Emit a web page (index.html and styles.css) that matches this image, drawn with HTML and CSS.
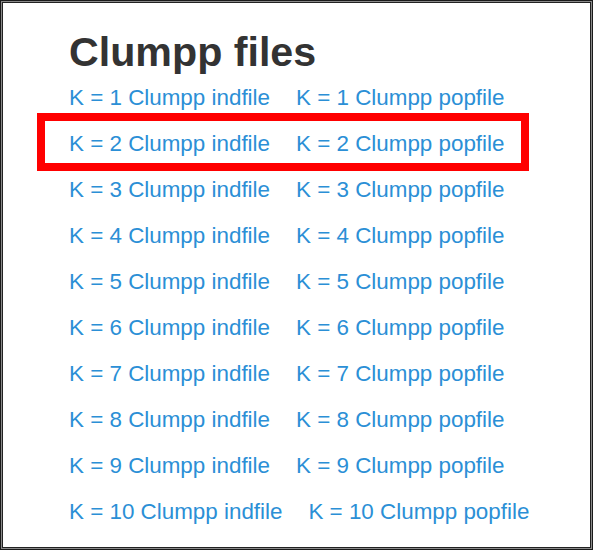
FILE: index.html
```html
<!DOCTYPE html>
<html>
<head>
<meta charset="utf-8">
<link rel="stylesheet" href="styles.css">
</head>
<body>
<div class="frame">
  <h2 class="title">Clumpp files</h2>
  <div class="rows">
    <div class="row"><a href="#">K = 1 Clumpp indfile</a><a href="#">K = 1 Clumpp popfile</a></div>
    <div class="row"><a href="#">K = 2 Clumpp indfile</a><a href="#">K = 2 Clumpp popfile</a></div>
    <div class="row"><a href="#">K = 3 Clumpp indfile</a><a href="#">K = 3 Clumpp popfile</a></div>
    <div class="row"><a href="#">K = 4 Clumpp indfile</a><a href="#">K = 4 Clumpp popfile</a></div>
    <div class="row"><a href="#">K = 5 Clumpp indfile</a><a href="#">K = 5 Clumpp popfile</a></div>
    <div class="row"><a href="#">K = 6 Clumpp indfile</a><a href="#">K = 6 Clumpp popfile</a></div>
    <div class="row"><a href="#">K = 7 Clumpp indfile</a><a href="#">K = 7 Clumpp popfile</a></div>
    <div class="row"><a href="#">K = 8 Clumpp indfile</a><a href="#">K = 8 Clumpp popfile</a></div>
    <div class="row"><a href="#">K = 9 Clumpp indfile</a><a href="#">K = 9 Clumpp popfile</a></div>
    <div class="row"><a href="#">K = 10 Clumpp indfile</a><a href="#">K = 10 Clumpp popfile</a></div>
  </div>
  <div class="highlight"></div>
</div>
</body>
</html>
```
FILE: styles.css
```css
html, body {
  margin: 0;
  padding: 0;
  background: #fff;
}
.frame {
  position: relative;
  box-sizing: border-box;
  width: 593px;
  height: 550px;
  border: 1px solid #1a1a1a;
  box-shadow: inset 0 0 0 1px #8a8a8a, inset 0 0 0 2px #222;
  padding: 29px 0 0 68px;
  font-family: "Liberation Sans", Arial, sans-serif;
}
.title {
  margin: 0 0 1px 0;
  font-size: 41.2px;
  line-height: 44px;
  font-weight: bold;
  color: #333;
}
.rows {
  display: flex;
  flex-direction: column;
}
.row {
  display: flex;
  gap: 26px;
  height: 46px;
  line-height: 46px;
  font-size: 22.4px;
}
.row a {
  color: #2b8fd6;
  text-decoration: none;
}
.highlight {
  position: absolute;
  left: 36px;
  top: 112px;
  width: 492px;
  height: 58px;
  box-sizing: border-box;
  border: 8px solid #ff0000;
}
```
